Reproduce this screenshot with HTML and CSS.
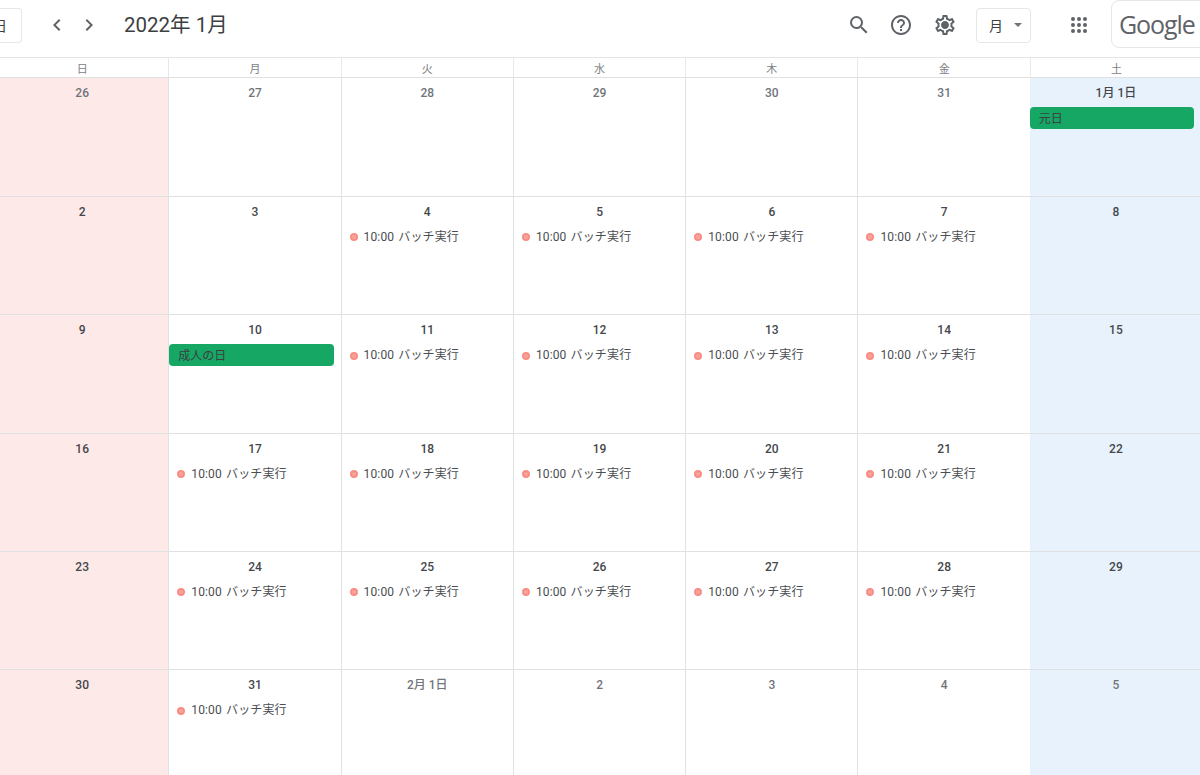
FILE: index.html
```html
<!DOCTYPE html>
<html lang="ja">
<head>
<meta charset="utf-8">
<title>カレンダー</title>
<link rel="stylesheet" href="styles.css">
</head>
<body>
<div class="page">
<header class="topbar">
  <button class="today"><span class="today-label">日</span></button>
  <div class="navs">
    <svg class="nav" viewBox="0 0 24 24" width="24" height="24"><path d="M15.4 7.4 14 6l-6 6 6 6 1.4-1.4L10.8 12z"/></svg>
    <svg class="nav" viewBox="0 0 24 24" width="24" height="24"><path d="M8.6 16.6 10 18l6-6-6-6-1.4 1.4L13.2 12z"/></svg>
  </div>
  <div class="title">2022年 1月</div>
  <div class="tools">
    <svg class="tool" viewBox="0 0 24 24" width="24" height="24"><path d="M15.5 14h-.79l-.28-.27A6.47 6.47 0 0 0 16 9.5 6.5 6.5 0 1 0 9.5 16c1.61 0 3.09-.59 4.23-1.57l.27.28v.79l5 4.99L20.49 19l-4.99-5zm-6 0C7.01 14 5 11.99 5 9.5S7.01 5 9.5 5 14 7.01 14 9.5 11.99 14 9.5 14z"/></svg>
    <svg class="tool" viewBox="0 0 24 24" width="24" height="24"><path d="M11 18h2v-2h-2v2zm1-16C6.48 2 2 6.48 2 12s4.48 10 10 10 10-4.48 10-10S17.52 2 12 2zm0 18c-4.41 0-8-3.59-8-8s3.59-8 8-8 8 3.59 8 8-3.59 8-8 8zm0-14c-2.21 0-4 1.79-4 4h2c0-1.1.9-2 2-2s2 .9 2 2c0 2-3 1.75-3 5h2c0-2.25 3-2.5 3-5 0-2.21-1.79-4-4-4z"/></svg>
    <svg class="tool gear" viewBox="0 0 24 24" width="24" height="24"><path d="M19.43 12.98c.04-.32.07-.64.07-.98s-.03-.66-.07-.98l2.11-1.65c.19-.15.24-.42.12-.64l-2-3.46c-.12-.22-.39-.3-.61-.22l-2.49 1c-.52-.4-1.08-.73-1.69-.98l-.38-2.65A.49.49 0 0 0 14 2h-4c-.25 0-.46.18-.49.42l-.38 2.65c-.61.25-1.17.59-1.69.98l-2.49-1a.5.5 0 0 0-.61.22l-2 3.46c-.13.22-.07.49.12.64l2.11 1.65c-.04.32-.07.65-.07.98s.03.66.07.98l-2.11 1.65c-.19.15-.24.42-.12.64l2 3.46c.12.22.39.3.61.22l2.49-1c.52.4 1.08.73 1.69.98l.38 2.65c.03.24.24.42.49.42h4c.25 0 .46-.18.49-.42l.38-2.65c.61-.25 1.17-.59 1.69-.98l2.49 1c.23.09.49 0 .61-.22l2-3.46c.12-.22.07-.49-.12-.64l-2.11-1.65zM17.45 11.27c.04.31.05.52.05.73s-.02.43-.05.73l-.14 1.13.89.7 1.08.84-.7 1.21-1.27-.51-1.04-.42-.9.68c-.43.32-.84.56-1.25.73l-1.06.43-.16 1.13-.2 1.35h-1.4l-.19-1.35-.16-1.13-1.06-.43c-.43-.18-.83-.41-1.23-.71l-.91-.7-1.06.43-1.27.51-.7-1.21 1.08-.84.89-.7-.14-1.13c-.03-.31-.05-.54-.05-.74s.02-.43.05-.73l.14-1.13-.89-.7-1.08-.84.7-1.21 1.27.51 1.04.42.9-.68c.43-.32.84-.56 1.25-.73l1.06-.43.16-1.13.2-1.35h1.39l.19 1.35.16 1.13 1.06.43c.43.18.83.41 1.23.71l.91.7 1.06-.43 1.27-.51.7 1.21-1.07.85-.89.7.14 1.13zM12 8c-2.21 0-4 1.79-4 4s1.79 4 4 4 4-1.79 4-4-1.79-4-4-4z"/></svg>
  </div>
  <button class="view"><span>月</span><i class="caret"></i></button>
  <svg class="apps" viewBox="0 0 24 24" width="24" height="24"><path d="M6 8a2 2 0 1 0 0-4 2 2 0 0 0 0 4zm6 12a2 2 0 1 0 0-4 2 2 0 0 0 0 4zm-6 0a2 2 0 1 0 0-4 2 2 0 0 0 0 4zm0-6a2 2 0 1 0 0-4 2 2 0 0 0 0 4zm6 0a2 2 0 1 0 0-4 2 2 0 0 0 0 4zm4-8a2 2 0 1 0 4 0 2 2 0 0 0-4 0zm-4 2a2 2 0 1 0 0-4 2 2 0 0 0 0 4zm6 6a2 2 0 1 0 0-4 2 2 0 0 0 0 4zm0 6a2 2 0 1 0 0-4 2 2 0 0 0 0 4z"/></svg>
  <div class="account"><span class="google">Google</span></div>
</header>
<div class="weekdays">
  <div class="wd">日</div><div class="wd">月</div><div class="wd">火</div><div class="wd">水</div><div class="wd">木</div><div class="wd">金</div><div class="wd">土</div>
</div>
<main class="month">
  <div class="cell sun"><div class="d muted">26</div></div>
  <div class="cell"><div class="d muted">27</div></div>
  <div class="cell"><div class="d muted">28</div></div>
  <div class="cell"><div class="d muted">29</div></div>
  <div class="cell"><div class="d muted">30</div></div>
  <div class="cell"><div class="d muted">31</div></div>
  <div class="cell sat"><div class="d">1月 1日</div><div class="allday">元日</div></div>

  <div class="cell sun"><div class="d">2</div></div>
  <div class="cell"><div class="d">3</div></div>
  <div class="cell"><div class="d">4</div><div class="ev"><i class="dot"></i>10:00 バッチ実行</div></div>
  <div class="cell"><div class="d">5</div><div class="ev"><i class="dot"></i>10:00 バッチ実行</div></div>
  <div class="cell"><div class="d">6</div><div class="ev"><i class="dot"></i>10:00 バッチ実行</div></div>
  <div class="cell"><div class="d">7</div><div class="ev"><i class="dot"></i>10:00 バッチ実行</div></div>
  <div class="cell sat"><div class="d">8</div></div>

  <div class="cell sun"><div class="d">9</div></div>
  <div class="cell"><div class="d">10</div><div class="allday">成人の日</div></div>
  <div class="cell"><div class="d">11</div><div class="ev"><i class="dot"></i>10:00 バッチ実行</div></div>
  <div class="cell"><div class="d">12</div><div class="ev"><i class="dot"></i>10:00 バッチ実行</div></div>
  <div class="cell"><div class="d">13</div><div class="ev"><i class="dot"></i>10:00 バッチ実行</div></div>
  <div class="cell"><div class="d">14</div><div class="ev"><i class="dot"></i>10:00 バッチ実行</div></div>
  <div class="cell sat"><div class="d">15</div></div>

  <div class="cell sun"><div class="d">16</div></div>
  <div class="cell"><div class="d">17</div><div class="ev"><i class="dot"></i>10:00 バッチ実行</div></div>
  <div class="cell"><div class="d">18</div><div class="ev"><i class="dot"></i>10:00 バッチ実行</div></div>
  <div class="cell"><div class="d">19</div><div class="ev"><i class="dot"></i>10:00 バッチ実行</div></div>
  <div class="cell"><div class="d">20</div><div class="ev"><i class="dot"></i>10:00 バッチ実行</div></div>
  <div class="cell"><div class="d">21</div><div class="ev"><i class="dot"></i>10:00 バッチ実行</div></div>
  <div class="cell sat"><div class="d">22</div></div>

  <div class="cell sun"><div class="d">23</div></div>
  <div class="cell"><div class="d">24</div><div class="ev"><i class="dot"></i>10:00 バッチ実行</div></div>
  <div class="cell"><div class="d">25</div><div class="ev"><i class="dot"></i>10:00 バッチ実行</div></div>
  <div class="cell"><div class="d">26</div><div class="ev"><i class="dot"></i>10:00 バッチ実行</div></div>
  <div class="cell"><div class="d">27</div><div class="ev"><i class="dot"></i>10:00 バッチ実行</div></div>
  <div class="cell"><div class="d">28</div><div class="ev"><i class="dot"></i>10:00 バッチ実行</div></div>
  <div class="cell sat"><div class="d">29</div></div>

  <div class="cell sun"><div class="d">30</div></div>
  <div class="cell"><div class="d">31</div><div class="ev"><i class="dot"></i>10:00 バッチ実行</div></div>
  <div class="cell"><div class="d muted">2月 1日</div></div>
  <div class="cell"><div class="d muted">2</div></div>
  <div class="cell"><div class="d muted">3</div></div>
  <div class="cell"><div class="d muted">4</div></div>
  <div class="cell sat"><div class="d muted">5</div></div>
</main>
</div>
</body>
</html>
```
FILE: styles.css
```css
* { box-sizing: border-box; }
html, body { margin: 0; height: 100%; overflow: hidden; background: #fff; }
body { font-family: Roboto, "Noto Sans CJK JP", sans-serif; color: #3c4043; }
.page { width: 1200px; height: 775px; overflow: hidden; }

.topbar { height: 58px; display: flex; align-items: center; border-bottom: 1px solid #e3e4e6; }
.today {
  width: 23px; height: 35px; margin-left: -1px; margin-top: -7px; padding: 0;
  display: flex; align-items: center; justify-content: flex-end; overflow: hidden;
  background: #fff; border: 1px solid #e6e7e9; border-left: 0; border-radius: 0 4px 4px 0;
  font: 14px "Noto Sans CJK JP", sans-serif; color: #3c4043;
}
.today-label { margin-right: 14px; width: 14px; flex: none; }
.navs { display: flex; gap: 8px; margin-left: 23px; margin-top: -7px; }
.nav { fill: #5f6368; }
.title { margin-left: 23px; margin-top: -7px; font-size: 20.5px; line-height: 28px; color: #3c4043; white-space: nowrap; }
.tools { display: flex; gap: 18px; margin-left: auto; margin-top: -7px; }
.tool { fill: #5f6368; }
.gear { margin-left: 2px; }
.view {
  width: 55px; height: 35px; margin-left: 19px; margin-top: -7px; padding: 0 0 0 12px;
  display: flex; align-items: center; gap: 11px;
  background: #fff; border: 1px solid #e6e7e9; border-radius: 4px;
  font: 14px "Noto Sans CJK JP", sans-serif; color: #3c4043;
}
.caret { width: 0; height: 0; border: 4px solid transparent; border-top: 4.5px solid #70757a; border-bottom: 0; }
.apps { fill: #5f6368; margin-left: 36px; margin-top: -7px; }
.account {
  width: 110px; height: 48px; margin-left: 20px; margin-right: -21px; margin-top: -9px; padding-left: 7px;
  display: flex; align-items: center;
  border: 1px solid #e6e7e9; border-radius: 8px; background: #fff;
}
.google { font: 500 25px/1 "Open Sans", sans-serif; letter-spacing: -1.1px; color: #5f6368; }

.weekdays, .month { display: grid; grid-template-columns: repeat(7, 172.3px); margin-left: -4px; width: 1206.1px; }
.weekdays { height: 19px; }
.wd { border-left: 1px solid #e8e9eb; text-align: center; font: 400 11px/20px "Noto Sans CJK JP", sans-serif; color: #7d8185; }
.wd:first-child { border-left: 0; }
.month { grid-auto-rows: 118.4px; margin-top: .4px; }
.cell { border-left: 1px solid #e0e1e3; border-top: 1px solid #dfe0e2; min-width: 0; padding-top: 7px; }
.sun, .sat { border-left: 0; }
.sun { background: #fde9e8; }
.sat { background: #e8f2fc; }
.d { text-align: center; font: 500 12px/17px Roboto, "Noto Sans CJK JP", sans-serif; color: #44474b; }
.d.muted { color: #70757a; }
.allday {
  height: 21.4px; margin: 5px 7px 0 0; padding-left: 9px;
  background: #16a765; border-radius: 4px;
  font: 12px/21px "Noto Sans CJK JP", sans-serif; color: #3c4043;
}
.sat .allday { margin-right: 8px; }
.ev {
  display: flex; align-items: center; height: 21px; margin-top: 6px; padding-left: 8px;
  font: 12px/21px Roboto, "Noto Sans CJK JP", sans-serif; letter-spacing: .14px; word-spacing: 1px; color: #4a4d51; white-space: pre;
}
.dot { width: 8px; height: 8px; margin-right: 6px; border-radius: 50%; background: #f6a49c; border: 2px solid #f98d83; flex: none; }
```
